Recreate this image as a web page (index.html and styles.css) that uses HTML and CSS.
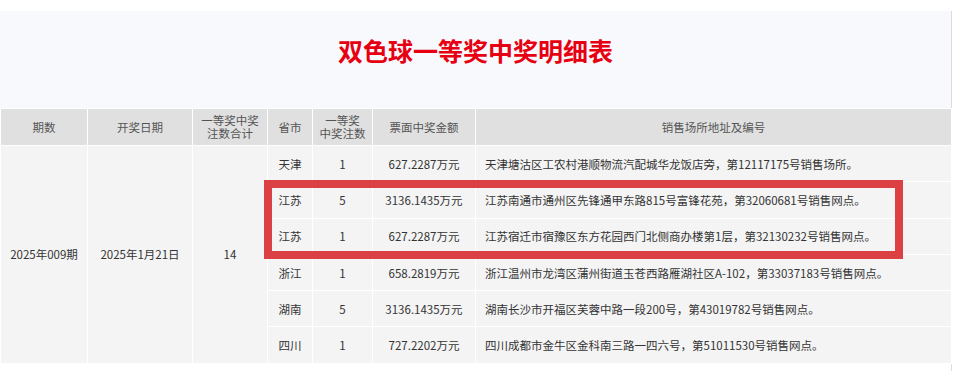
FILE: index.html
```html
<!DOCTYPE html>
<html lang="zh-CN">
<head>
<meta charset="utf-8">
<title>双色球一等奖中奖明细表</title>
<link rel="stylesheet" href="styles.css">
</head>
<body>
<div class="page">
  <div class="panel">
    <div class="title-block">
      <h1 class="title">双色球一等奖中奖明细表</h1>
    </div>
    <div class="table-wrap">
      <table class="prize-table">
        <colgroup>
          <col class="c1"><col class="c2"><col class="c3"><col class="c4"><col class="c5"><col class="c6"><col class="c7">
        </colgroup>
        <thead>
          <tr>
            <th>期数</th>
            <th>开奖日期</th>
            <th><span class="hl">一等奖中奖</span><span class="hl">注数合计</span></th>
            <th>省市</th>
            <th><span class="hl">一等奖</span><span class="hl">中奖注数</span></th>
            <th>票面中奖金额</th>
            <th>销售场所地址及编号</th>
          </tr>
        </thead>
        <tbody>
          <tr>
            <td rowspan="6">2025年009期</td>
            <td rowspan="6">2025年1月21日</td>
            <td rowspan="6">14</td>
            <td>天津</td>
            <td>1</td>
            <td>627.2287万元</td>
            <td class="addr">天津塘沽区工农村港顺物流汽配城华龙饭店旁，第12117175号销售场所。</td>
          </tr>
          <tr>
            <td>江苏</td>
            <td>5</td>
            <td>3136.1435万元</td>
            <td class="addr">江苏南通市通州区先锋通甲东路815号富锋花苑，第32060681号销售网点。</td>
          </tr>
          <tr>
            <td>江苏</td>
            <td>1</td>
            <td>627.2287万元</td>
            <td class="addr">江苏宿迁市宿豫区东方花园西门北侧商办楼第1层，第32130232号销售网点。</td>
          </tr>
          <tr>
            <td>浙江</td>
            <td>1</td>
            <td>658.2819万元</td>
            <td class="addr">浙江温州市龙湾区蒲州街道玉苍西路雁湖社区A-102，第33037183号销售网点。</td>
          </tr>
          <tr>
            <td>湖南</td>
            <td>5</td>
            <td>3136.1435万元</td>
            <td class="addr">湖南长沙市开福区芙蓉中路一段200号，第43019782号销售网点。</td>
          </tr>
          <tr>
            <td>四川</td>
            <td>1</td>
            <td>727.2202万元</td>
            <td class="addr">四川成都市金牛区金科南三路一四六号，第51011530号销售网点。</td>
          </tr>
        </tbody>
      </table>
      <div class="highlight"></div>
    </div>
  </div>
</div>
</body>
</html>
```

FILE: styles.css
```css
* { box-sizing: border-box; }
html, body {
  margin: 0;
  padding: 0;
  background: #ffffff;
  font-family: "Noto Sans CJK SC", "Noto Sans", sans-serif;
}
.page {
  padding-top: 11px;
}
.panel {
  width: 952px;
  background: #f8f9fc;
  border-right: 1px solid #dcdcdc;
}
.title-block {
  height: 97px;
  padding-top: 27px;
  text-align: center;
}
.title {
  margin: 0;
  font-size: 25px;
  line-height: 25px;
  font-weight: 700;
  color: #e60012;
  letter-spacing: 0;
}
.table-wrap {
  position: relative;
  background: #ffffff;
  padding-bottom: 8px;
}
.prize-table {
  width: 951px;
  border-collapse: collapse;
  table-layout: fixed;
  font-size: 11.5px;
  color: #333333;
  border-bottom: 1px solid #e8e8e8;
}
.c1 { width: 87px; }
.c2 { width: 105px; }
.c3 { width: 75px; }
.c4 { width: 45px; }
.c5 { width: 60px; }
.c6 { width: 103px; }
.c7 { width: 476px; }
.prize-table th,
.prize-table td {
  border: 1px solid #ffffff;
  text-align: center;
  vertical-align: middle;
  padding: 0;
}
.prize-table th {
  height: 37px;
  background: #e0e0e0;
  color: #555555;
  font-weight: 400;
  line-height: 14px;
}
.prize-table th .hl {
  display: block;
  height: 13px;
  line-height: 13px;
  overflow: visible;
}
.prize-table td {
  height: 36.3px;
  background: #f4f4f4;
}
.prize-table td.addr {
  text-align: left;
  padding-left: 9px;
}
.highlight {
  position: absolute;
  left: 264px;
  top: 72px;
  width: 639px;
  height: 79px;
  border: 8px solid #db4143;
  pointer-events: none;
}
```
